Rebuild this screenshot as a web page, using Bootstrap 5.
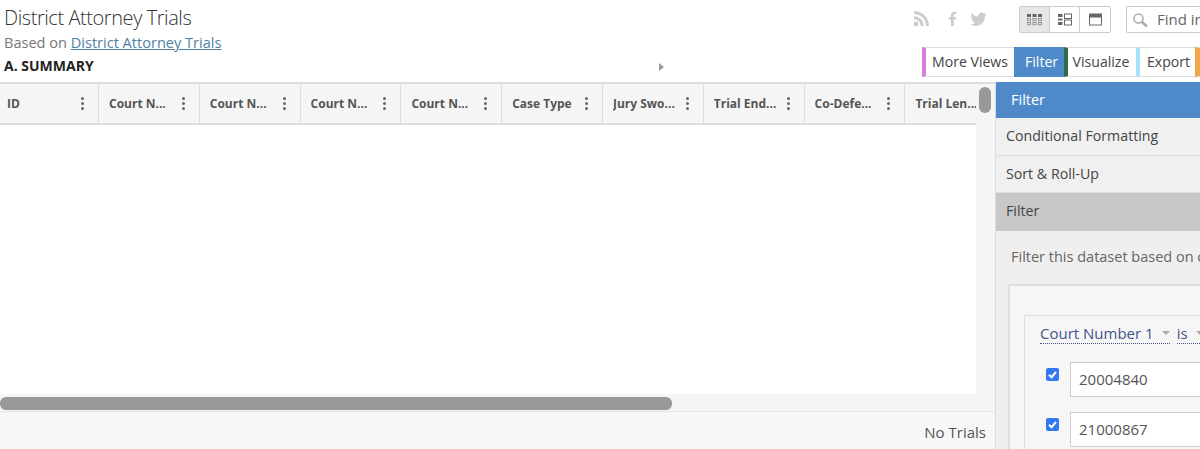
<!DOCTYPE html>
<html lang="en">
<head>
<meta charset="utf-8">
<title>District Attorney Trials</title>
<link href="https://cdn.jsdelivr.net/npm/bootstrap@5.3.0/dist/css/bootstrap.min.css" rel="stylesheet">
<style>
html,body{height:449px;overflow:hidden;}
body{font-family:"Open Sans",sans-serif;color:#444;background:#fff;width:1200px;}
.page-top{height:82px;}
.head-left{width:900px;padding:4px 0 0 4px;}
.ds-title{font-size:20px;font-weight:300;line-height:27px;color:#333;margin:0;letter-spacing:-.43px;}
.ds-sub{font-size:14.55px;line-height:20px;color:#777;margin-top:1px;}
.ds-sub a{color:#4f7fa3;}
.ds-view{font-size:14px;font-weight:700;line-height:19px;color:#222;margin-top:4px;}
.expander{position:absolute;left:659px;top:63px;width:0;height:0;border-left:5px solid #999;border-top:4px solid transparent;border-bottom:4px solid transparent;}
.head-right{width:300px;}
.social-row{height:47px;padding:5px 0 0 13px;}
.social-set{width:89px;flex:none;}
.soc-ico{width:17px;height:17px;fill:#ccc;display:block;margin-top:5px;flex:none;}
.soc-fb{margin-left:14px;}
.soc-tw{margin-left:9px;}
.layout-btns{margin:1px 0 0 17px;border:1px solid #ccc;border-radius:2px;height:27px;}
.layout-btn{width:30px;height:25px;border-right:1px solid #ccc;}
.layout-btn:last-child{border-right:0;}
.layout-btn.is-on{background:#e6e6e6;}
.layout-btn svg{width:17px;height:13px;display:block;}
.find-box{margin:1px 0 0 15px;flex:1;min-width:0;height:27px;border:1px solid #ccc;border-right:0;border-radius:2px 0 0 2px;font-size:15px;color:#666;padding-left:5px;gap:9px;overflow:hidden;white-space:nowrap;}
.find-box svg{flex:none;}
.view-tabs{padding-left:22px;height:30px;}
.vtab{font-size:14.1px;line-height:27px;height:30px;border-top:1px solid #ddd;border-bottom:1px solid #ddd;padding:0 6px;color:#444;background:#fff;white-space:nowrap;}
.vt-more{border-left:4px solid #d97fd6;width:92px;}
.vt-filter{background:#4e8ac9;color:#fff;border-top-color:#4e8ac9;border-bottom-color:#4e8ac9;padding:0 0 0 11px;width:50px;}
.vt-viz{border-left:4px solid #2f6b45;width:73px;padding-left:5px;}
.vt-exp{border-left:4px solid #a3e3fa;width:59px;padding-left:7px;}
.vt-last{border-left:5px solid #f0a64b;width:4px;padding:0;}
.work-row{height:367px;}
.grid-side{width:996px;position:relative;border-right:1px solid #ddd;}
.col-head-row{height:43px;background:#f5f5f5;border-top:2px solid #ddd;border-bottom:2px solid #ddd;}
.col-cell{width:100.8px;flex:none;height:39px;border-right:1px solid #ddd;padding:0 10px;font-size:12px;font-weight:700;color:#555;white-space:nowrap;}
.col-cell:first-child{width:99px;padding-left:7px;}
.col-cell:last-child{border-right:0;}
.col-name{flex:1;overflow:hidden;}
.kebab{display:flex;flex-direction:column;gap:2px;margin-right:4px;}
.kebab i{display:block;width:3px;height:3px;border-radius:50%;background:#666;}
.grid-body{height:269px;width:976px;background:#fff;}
.grid-gutter{height:18px;background:#f5f5f5;position:relative;border-bottom:1px solid #e6e6e6;}
.vbar-track{position:absolute;left:976px;top:2px;width:19px;height:310px;background:#f5f5f5;}
.vbar{position:absolute;left:979px;top:5px;width:12px;height:26px;border-radius:6px;background:#999;}
.hbar{position:absolute;left:0;top:3px;width:672px;height:13px;border-radius:6px;background:#999;}
.grid-foot{height:37px;background:#f7f7f7;font-size:15px;color:#555;padding:4px 9px 0 0;}
.side-pane{flex:1;background:#efefef;overflow:hidden;}
.pane-head{height:36px;background:#4e8ac9;color:#fff;font-size:14.5px;line-height:36px;padding-left:15px;}
.pane-item{height:37.5px;line-height:36px;font-size:14.2px;padding-left:10px;color:#444;background:#f0f0f0;border-bottom:1px solid #ddd;white-space:nowrap;}
.pane-item.is-sel{background:#c8c8c8;border-bottom:0;}
.pane-body{padding:16px 0 0 15px;background:#efefef;}
.pane-desc{font-size:14.5px;line-height:20px;color:#666;white-space:nowrap;}
.filter-outer{margin:17px 0 0 -3px;border:2px solid #ddd;border-right:0;background:#f6f6f6;height:170px;padding:29px 0 0 14px;}
.filter-inner{border:1px solid #ddd;border-right:0;background:#f6f6f6;height:140px;padding:7px 0 0 15px;}
.rule-line{font-size:15px;line-height:20px;color:#44548a;gap:7px;white-space:nowrap;margin-bottom:18px;}
.rule-pick{border-bottom:1px dotted #44548a;display:inline-flex;align-items:center;gap:8px;padding-bottom:0;}
.rule-pick::after{content:"";border-top:4px solid #aaa;border-left:4px solid transparent;border-right:4px solid transparent;}
.val-row{height:35px;margin-bottom:15px;}
.val-check{width:13px;height:13px;margin:6px 11px 0 6px;background:#3478f0;border-radius:2px;flex:none;}
.val-check svg{display:block;width:13px;height:13px;}
.val-input{flex:1;height:35px;background:#fff;border:1px solid #ccc;border-right:0;font-size:15px;line-height:33px;padding-left:8px;color:#555;}
</style>
</head>
<body>
<div class="page-top d-flex position-relative">
  <div class="head-left">
    <h1 class="ds-title">District Attorney Trials</h1>
    <div class="ds-sub">Based on <a href="#">District Attorney Trials</a></div>
    <div class="ds-view">A. SUMMARY</div>
  </div>
  <span class="expander"></span>
  <div class="head-right">
    <div class="social-row d-flex align-items-start">
      <div class="social-set d-flex align-items-center">
        <svg class="soc-ico" viewBox="0 0 17 17"><circle cx="3" cy="14" r="2.4"/><path d="M1 6.200v3a6.800 6.800 0 0 1 6.800 6.800h3A9.800 9.800 0 0 0 1 6.200z"/><path d="M1 1v3a12 12 0 0 1 12 12h3A15 15 0 0 0 1 1z"/></svg>
        <svg class="soc-ico soc-fb" viewBox="0 0 17 17"><path d="M7 16V9.500H4.800V7H7V5.200C7 3 8.300 1.800 10.300 1.800c.9 0 1.700.1 1.900.1v2.200h-1.300c-1 0-1.200.5-1.200 1.200V7h2.500l-.3 2.500H9.700V16z"/></svg>
        <svg class="soc-ico soc-tw" viewBox="0 0 17 17"><path d="M16.500 4.200c-.6.300-1.200.4-1.900.5.700-.4 1.200-1 1.400-1.800-.6.400-1.300.6-2 .8a3.300 3.300 0 0 0-5.600 3C5.700 6.600 3.300 5.300 1.700 3.300c-.9 1.500-.4 3.400 1 4.400-.5 0-1-.2-1.500-.4 0 1.600 1.100 3 2.600 3.300-.5.100-1 .2-1.500.1.400 1.300 1.600 2.200 3.100 2.300A6.600 6.600 0 0 1 .5 14.300 9.300 9.300 0 0 0 14.900 6c.6-.5 1.200-1.100 1.600-1.800z"/></svg>
      </div>
      <div class="layout-btns d-flex">
        <div class="layout-btn is-on d-flex align-items-center justify-content-center">
          <svg viewBox="0 0 17 13" fill="#666"><rect x="1" y="1" width="4" height="3"/><rect x="6.500" y="1" width="4" height="3"/><rect x="12" y="1" width="4" height="3"/><rect x="1.400" y="5.400" width="3.200" height="2.400" fill="none" stroke="#888" stroke-width=".8"/><rect x="6.900" y="5.400" width="3.200" height="2.400" fill="none" stroke="#888" stroke-width=".8"/><rect x="12.400" y="5.400" width="3.200" height="2.400" fill="none" stroke="#888" stroke-width=".8"/><rect x="1.400" y="9.400" width="3.200" height="2.400" fill="none" stroke="#888" stroke-width=".8"/><rect x="6.900" y="9.400" width="3.200" height="2.400" fill="none" stroke="#888" stroke-width=".8"/><rect x="12.400" y="9.400" width="3.200" height="2.400" fill="none" stroke="#888" stroke-width=".8"/></svg>
        </div>
        <div class="layout-btn d-flex align-items-center justify-content-center">
          <svg viewBox="0 0 17 13" fill="#666"><rect x="2" y="1" width="4.500" height="3"/><rect x="2" y="5.500" width="4.500" height="2"/><rect x="2" y="9" width="4.500" height="3"/><rect x="8.500" y="1" width="7" height="4.500" fill="none" stroke="#666"/><rect x="8.500" y="7" width="7" height="5" fill="none" stroke="#666"/></svg>
        </div>
        <div class="layout-btn d-flex align-items-center justify-content-center">
          <svg viewBox="0 0 17 13" fill="none" stroke="#666"><rect x="2.500" y="1.500" width="12" height="10.500"/><rect x="2.500" y="1" width="12" height="3" fill="#666"/></svg>
        </div>
      </div>
      <div class="find-box d-flex align-items-center">
        <svg width="16" height="16" viewBox="0 0 16 16" fill="none" stroke="#aaa" stroke-width="1.500"><circle cx="6.500" cy="6.500" r="4.500"/><path d="M10 10l5 4.500" stroke-width="2.500"/></svg>
        <span>Find in this Dataset</span>
      </div>
    </div>
    <div class="view-tabs d-flex">
      <div class="vtab vt-more">More Views</div>
      <div class="vtab vt-filter">Filter</div>
      <div class="vtab vt-viz">Visualize</div>
      <div class="vtab vt-exp">Export</div>
      <div class="vtab vt-last"></div>
    </div>
  </div>
</div>
<div class="work-row d-flex">
  <div class="grid-side">
    <div class="col-head-row d-flex overflow-hidden">
      <div class="col-cell d-flex align-items-center"><span class="col-name">ID</span><span class="kebab"><i></i><i></i><i></i></span></div>
      <div class="col-cell d-flex align-items-center"><span class="col-name">Court N...</span><span class="kebab"><i></i><i></i><i></i></span></div>
      <div class="col-cell d-flex align-items-center"><span class="col-name">Court N...</span><span class="kebab"><i></i><i></i><i></i></span></div>
      <div class="col-cell d-flex align-items-center"><span class="col-name">Court N...</span><span class="kebab"><i></i><i></i><i></i></span></div>
      <div class="col-cell d-flex align-items-center"><span class="col-name">Court N...</span><span class="kebab"><i></i><i></i><i></i></span></div>
      <div class="col-cell d-flex align-items-center"><span class="col-name">Case Type</span><span class="kebab"><i></i><i></i><i></i></span></div>
      <div class="col-cell d-flex align-items-center"><span class="col-name">Jury Swo...</span><span class="kebab"><i></i><i></i><i></i></span></div>
      <div class="col-cell d-flex align-items-center"><span class="col-name">Trial End...</span><span class="kebab"><i></i><i></i><i></i></span></div>
      <div class="col-cell d-flex align-items-center"><span class="col-name">Co-Defe...</span><span class="kebab"><i></i><i></i><i></i></span></div>
      <div class="col-cell d-flex align-items-center"><span class="col-name">Trial Len...</span></div>
    </div>
    <div class="vbar-track"></div>
    <div class="vbar"></div>
    <div class="grid-body"></div>
    <div class="grid-gutter"><div class="hbar"></div></div>
    <div class="grid-foot d-flex align-items-center justify-content-end">No Trials</div>
  </div>
  <div class="side-pane">
    <div class="pane-head">Filter</div>
    <div class="pane-item">Conditional Formatting</div>
    <div class="pane-item">Sort &amp; Roll-Up</div>
    <div class="pane-item is-sel">Filter</div>
    <div class="pane-body">
      <div class="pane-desc">Filter this dataset based on one or more conditions</div>
      <div class="filter-outer">
        <div class="filter-inner">
          <div class="rule-line d-flex"><span class="rule-pick">Court Number 1</span><span class="rule-pick">is</span></div>
          <div class="val-row d-flex"><span class="val-check"><svg viewBox="0 0 13 13"><path d="M3 6.800l2.500 2.500L10 4" fill="none" stroke="#fff" stroke-width="2"/></svg></span><div class="val-input">20004840</div></div>
          <div class="val-row d-flex"><span class="val-check"><svg viewBox="0 0 13 13"><path d="M3 6.800l2.500 2.500L10 4" fill="none" stroke="#fff" stroke-width="2"/></svg></span><div class="val-input">21000867</div></div>
        </div>
      </div>
    </div>
  </div>
</div>
</body>
</html>
